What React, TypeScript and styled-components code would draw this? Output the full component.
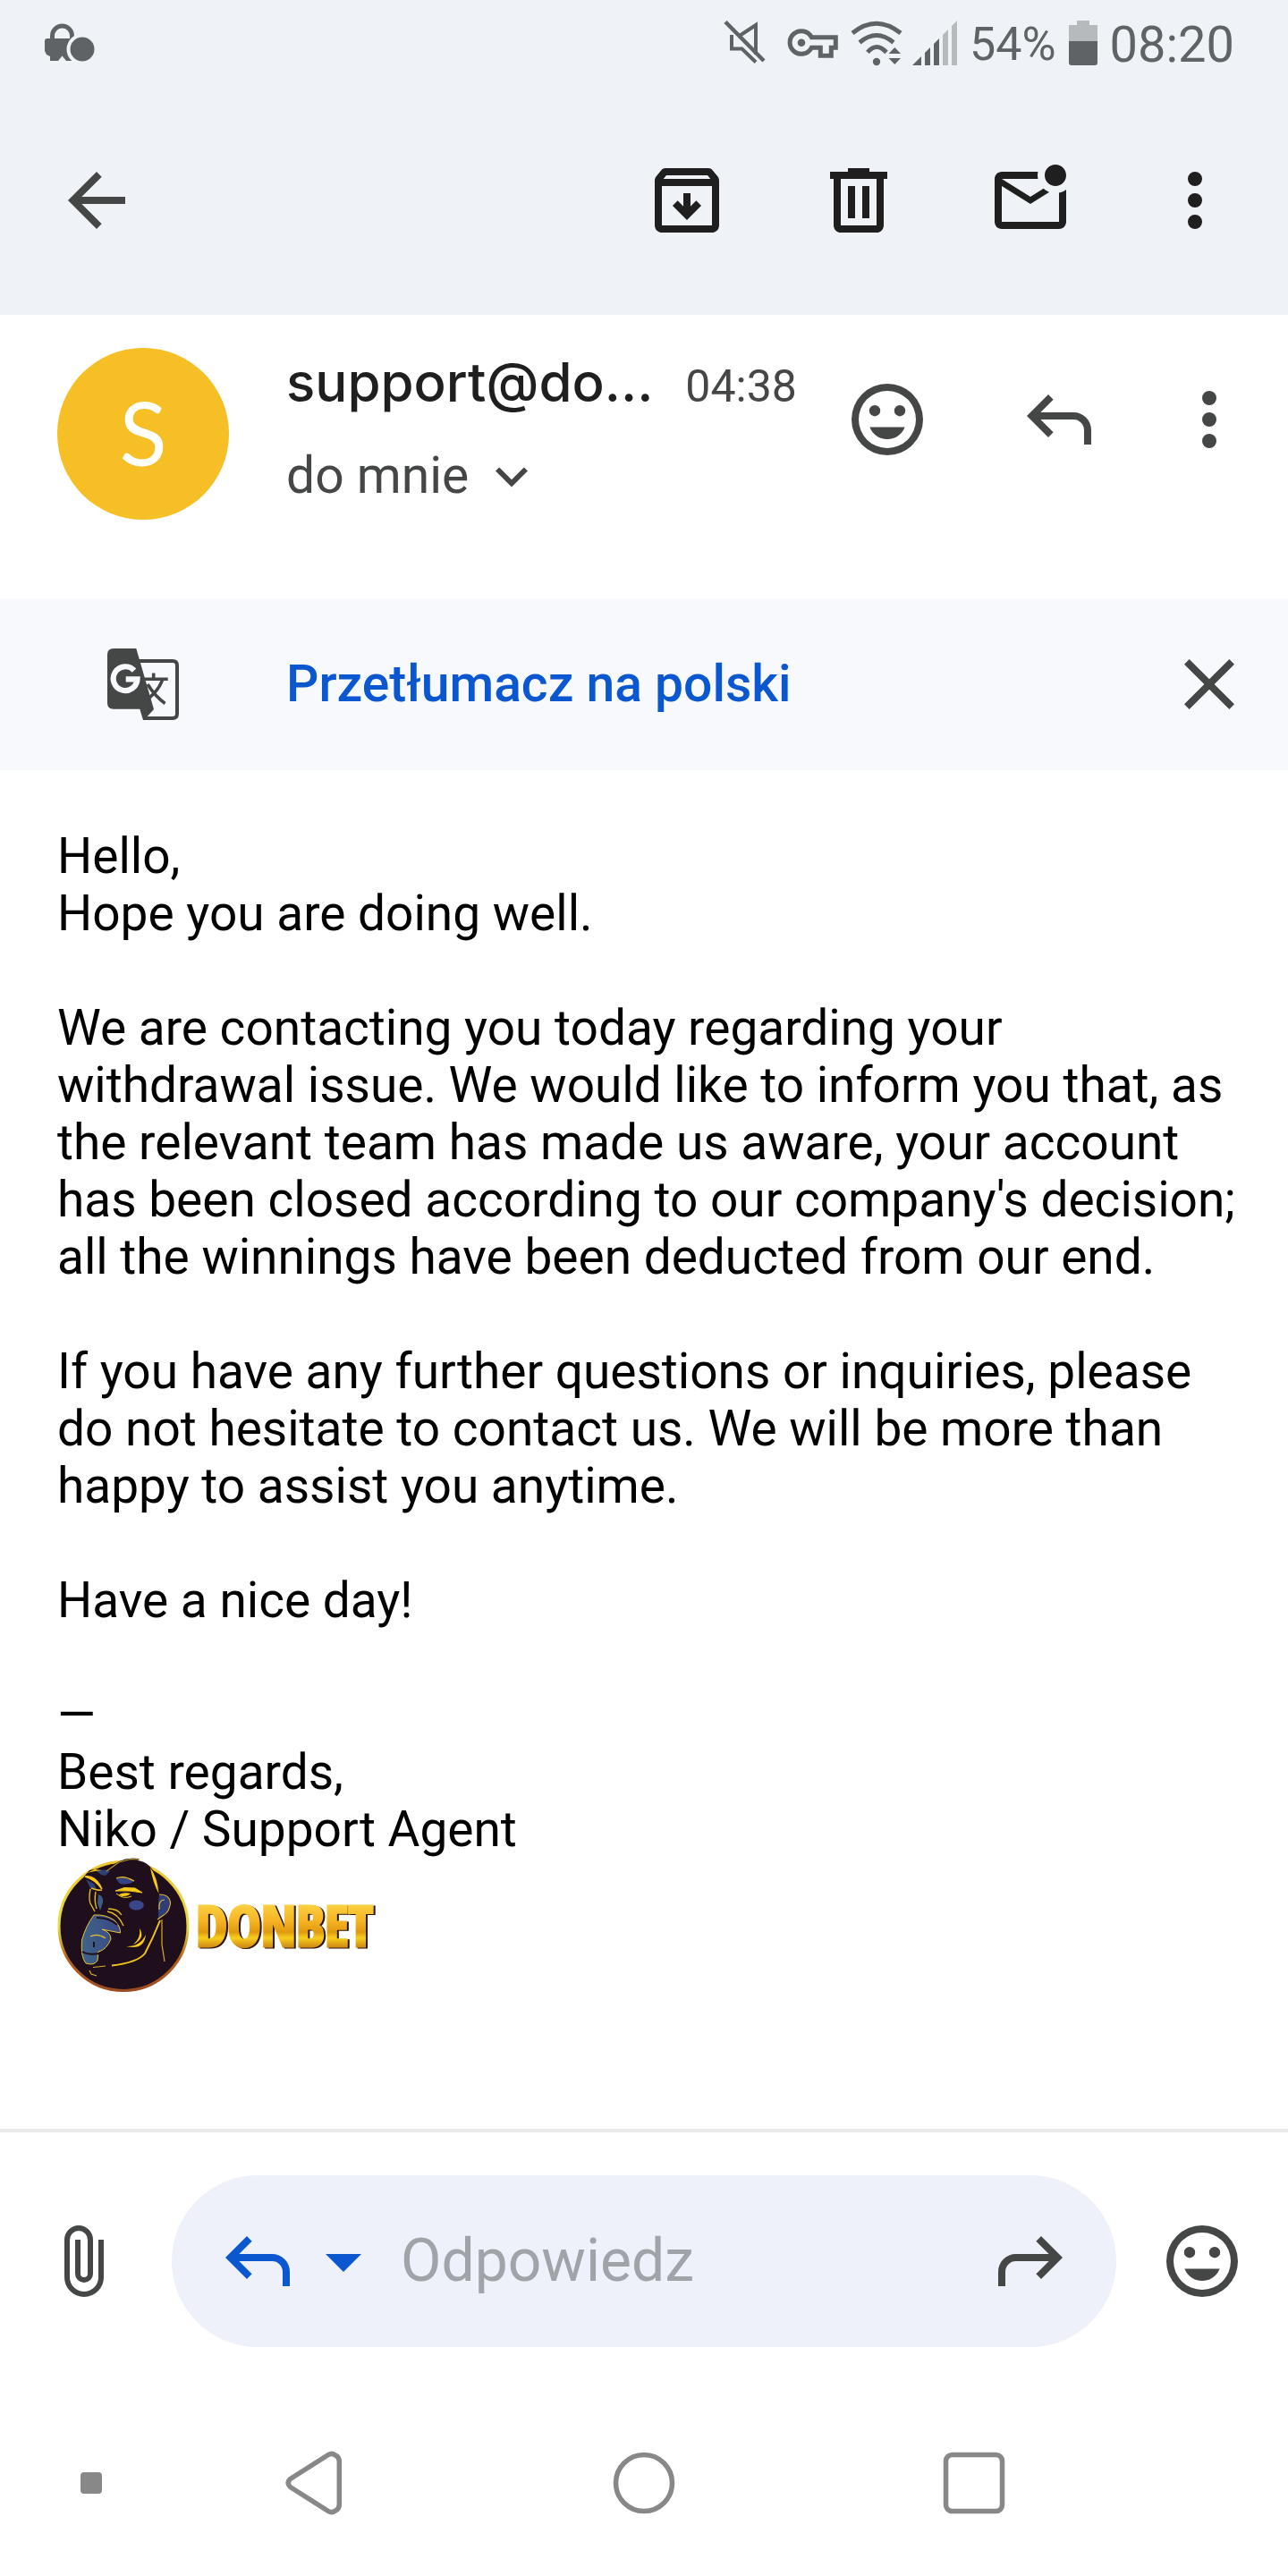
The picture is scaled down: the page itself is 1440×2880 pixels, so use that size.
import React from 'react';
import styled, { createGlobalStyle } from 'styled-components';

const colors = {
  ink: '#1f1f1f',
  muted: '#444746',
  status: '#5f6366',
  faint: '#b6babc',
  bar: '#eff3f8',
  banner: '#f7f9fd',
  field: '#eef1fa',
  blue: '#0b57d0',
  nav: '#888888',
};

const GlobalStyle = createGlobalStyle`
  *, *::before, *::after { box-sizing: border-box; }
  body { margin: 0; background: #fff; }
`;

const Screen = styled.div`
  display: flex;
  flex-direction: column;
  min-height: 100vh;
  background: #fff;
  color: ${colors.ink};
  font-family: Roboto, 'Noto Sans', sans-serif;
`;

const Header = styled.header`
  background: ${colors.bar};
`;

const StatusBar = styled.div`
  display: flex;
  align-items: center;
  justify-content: space-between;
  height: 96px;
  padding: 4px 60px 0 48px;
  color: ${colors.status};
`;

const StatusGroup = styled.div`
  display: flex;
  align-items: center;
  gap: 14px;
`;

const StatusText = styled.span<{ $size: number }>`
  font-size: ${(p) => p.$size}px;
  line-height: 64px;
`;

const Toolbar = styled.nav`
  display: flex;
  align-items: center;
  gap: 96px;
  height: 256px;
  padding: 0 64px 0 60px;
`;

const Spacer = styled.div`
  flex: 1;
`;

const IconButton = styled.button<{ $width?: number; $tone?: string }>`
  display: flex;
  flex: none;
  align-items: center;
  justify-content: center;
  width: ${(p) => p.$width ?? 96}px;
  height: 96px;
  padding: 0;
  border: 0;
  background: none;
  color: ${(p) => p.$tone ?? colors.muted};
  cursor: pointer;

  svg {
    flex: none;
  }
`;

const Sender = styled.section`
  display: flex;
  align-items: flex-start;
  padding: 37px 64px 88px;
`;

const Avatar = styled.div`
  display: flex;
  flex: none;
  align-items: center;
  justify-content: center;
  width: 192px;
  height: 192px;
  margin-right: 64px;
  padding-bottom: 4px;
  border-radius: 50%;
  background: #f6bf26;
  color: #fff;
  font-family: Lato, sans-serif;
  font-size: 98px;
  line-height: 96px;
`;

const SenderDetails = styled.div`
  display: flex;
  flex: 1;
  flex-direction: column;
  gap: 28px;
  min-width: 0;
`;

const SenderLine = styled.div`
  display: flex;
  align-items: baseline;
  gap: 36px;
  white-space: nowrap;
`;

const SenderName = styled.h1`
  margin: 0;
  font-family: Inter, sans-serif;
  font-size: 60px;
  font-weight: 500;
  line-height: 76px;
`;

const SentTime = styled.time`
  color: ${colors.muted};
  font-size: 50px;
  line-height: 72px;
`;

const Recipient = styled.button`
  display: flex;
  align-items: center;
  align-self: flex-start;
  gap: 12px;
  padding: 0;
  border: 0;
  background: none;
  color: ${colors.muted};
  font-family: inherit;
  font-size: 57px;
  line-height: 72px;
  cursor: pointer;
`;

const SenderActions = styled.div`
  display: flex;
  gap: 96px;
  padding-top: 32px;
`;

const TranslateBanner = styled.section`
  display: flex;
  align-items: center;
  height: 192px;
  padding: 0 64px;
  background: ${colors.banner};
`;

const TranslateIcon = styled.div`
  display: flex;
  justify-content: center;
  width: 192px;
  margin-right: 64px;
  color: ${colors.muted};
`;

const TranslateLink = styled.a`
  flex: 1;
  color: ${colors.blue};
  font-size: 57px;
  font-weight: 500;
  line-height: 72px;
  text-decoration: none;
`;

const Message = styled.main`
  flex: 1;
  padding: 64px 56px 64px 64px;
  color: #000;
  font-size: 55px;
  line-height: 64px;
`;

const Paragraph = styled.p`
  margin: 0 0 64px;
`;

const Signature = styled.footer``;

const Logo = styled.svg`
  display: block;
`;

const LogoWord = styled.text`
  font-family: 'Open Sans Condensed', 'Roboto Condensed', sans-serif;
  font-size: 63px;
  font-weight: 700;
  filter: drop-shadow(2px 1px 0 #2a1510);
`;

const ReplyBar = styled.form`
  display: flex;
  align-items: center;
  gap: 48px;
  padding: 48px;
  border-top: 4px solid #e8eaea;
`;

const ReplyField = styled.div`
  display: flex;
  flex: 1;
  align-items: center;
  height: 192px;
  min-width: 0;
  padding: 0 48px;
  border-radius: 96px;
  background: ${colors.field};
`;

const ReplyInput = styled.input`
  flex: 1;
  min-width: 0;
  padding: 0 16px;
  border: 0;
  outline: 0;
  background: none;
  color: ${colors.ink};
  font-family: inherit;
  font-size: 66px;
  line-height: 80px;

  &::placeholder {
    color: #a0a3a8;
    opacity: 1;
  }
`;

const SystemNav = styled.nav`
  display: grid;
  grid-template-columns: 168px repeat(3, 1fr) 168px;
  align-items: center;
  justify-items: center;
  height: 208px;
`;

const NavDot = styled.div`
  padding-left: 36px;
`;

function Glyph({ d, size = 96 }: { d: string; size?: number }) {
  return (
    <svg width={size} height={size} viewBox="0 0 24 24" fill="currentColor" aria-hidden="true">
      <path fillRule="evenodd" d={d} />
    </svg>
  );
}

const paths = {
  back: 'M20 11H7.83l5.59-5.59L12 4l-8 8 8 8 1.41-1.41L7.83 13H20v-2z',
  archive:
    'M20.54 5.23l-1.39-1.68C18.88 3.21 18.47 3 18 3H6c-.47 0-.88.21-1.16.55L3.46 5.23C3.17 5.57 3 6.02 3 6.5V19c0 1.1.9 2 2 2h14c1.1 0 2-.9 2-2V6.5c0-.48-.17-.93-.46-1.27zM6.24 5h11.52l.83 1H5.42l.82-1zM5 19V8h14v11H5zm11-5.5l-4 4-4-4 1.41-1.41L11 13.67V10h2v3.67l1.59-1.58L16 13.5z',
  trash:
    'M7 21c-.55 0-1.02-.2-1.41-.59S5 19.55 5 19V6H4V4h5V3h6v1h5v2h-1v13c0 .55-.2 1.02-.59 1.41S17.55 21 17 21zM17 6H7v13h10zM9 17h2V8H9zm4 0h2V8h-2z',
  unread:
    'M22 8.98V18c0 1.1-.9 2-2 2H4c-1.1 0-2-.9-2-2V6c0-1.1.9-2 2-2h10.1a5 5 0 0 0 0 2H4l8 5 3.67-2.29c.47.43 1.02.76 1.63.98L12 13 4 8v10h16V9.9c.74-.15 1.42-.48 2-.92zM16 5c0 1.66 1.34 3 3 3s3-1.34 3-3-1.34-3-3-3-3 1.34-3 3z',
  more:
    'M12 4a2 2 0 1 0 0 4 2 2 0 0 0 0-4zm0 6a2 2 0 1 0 0 4 2 2 0 0 0 0-4zm0 6a2 2 0 1 0 0 4 2 2 0 0 0 0-4z',
  reply:
    'M19 19v-4c0-.83-.29-1.54-.88-2.13A2.9 2.9 0 0 0 16 12H6.83l3.58 3.59L9 17l-6-6 6-6 1.41 1.41L6.83 10H16c1.38 0 2.56.49 3.54 1.46C20.51 12.44 21 13.63 21 15v4z',
  forward:
    'M5 19v-4c0-.83.29-1.54.88-2.13A2.9 2.9 0 0 1 8 12h9.17l-3.58 3.59L15 17l6-6-6-6-1.41 1.41L17.17 10H8c-1.38 0-2.56.49-3.54 1.46C3.49 12.44 3 13.63 3 15v4z',
  expand: 'M12 16.2l-6-6 1.4-1.4 4.6 4.6 4.6-4.6 1.4 1.4z',
  close: 'M19 6.41L17.59 5 12 10.59 6.41 5 5 6.41 10.59 12 5 17.59 6.41 19 12 13.41 17.59 19 19 17.59 13.41 12z',
  dropdown: 'M7 10h10l-5 5z',
  smile:
    'M12 2a10 10 0 1 0 0 20 10 10 0 0 0 0-20zm0 2a8 8 0 1 1 0 16 8 8 0 0 1 0-16zM8.5 8a1.55 1.55 0 1 0 0 3.1 1.55 1.55 0 0 0 0-3.1zm7 0a1.55 1.55 0 1 0 0 3.1 1.55 1.55 0 0 0 0-3.1zM7.1 14.1h9.8c-.75 2-2.6 3.4-4.9 3.4s-4.150-1.4-4.9-3.4z',
};

function TranslateGlyph() {
  return (
    <svg width={96} height={96} viewBox="0 0 96 96" fill="none" stroke="currentColor" aria-hidden="true">
      <path d="M42 22H81Q86 22 86 27V81Q86 86 81 86H48" strokeWidth={4} />
      <path d="M59.700 35.500V42M47 42.300H75.700M69.500 43Q66 54 54 64M53 48Q61 61 72.500 69.500" strokeWidth={3.600} />
      <path d="M15 8H40.300L60 76L49 88H48L44.300 75.700H15Q8 75.700 8 69V15Q8 8 15 8Z" fill="currentColor" stroke="none" />
      <path d="M53 56.500Q57 61.500 58.500 70" stroke={colors.banner} strokeWidth={0} />
      <path d="M38 32.600A13.400 13.400 0 1 0 41.500 42.300H28.700" stroke={colors.banner} strokeWidth={6.200} />
    </svg>
  );
}

function Paperclip() {
  return (
    <svg width={96} height={96} viewBox="0 0 24 24" fill="none" stroke="currentColor" strokeWidth={1.5} aria-hidden="true">
      <path d="M16.250 6V16.500A4.750 4.750 0 0 1 6.750 16.500V6A3.250 3.250 0 0 1 13.250 6V15.500A1.750 1.750 0 0 1 9.750 15.500V6" />
    </svg>
  );
}

function LockStatus() {
  return (
    <svg width={62} height={54} viewBox="0 0 62 54" aria-hidden="true">
      <path d="M10.500 22V17a11 11 0 0 1 22 0V22" fill="none" stroke="currentColor" strokeWidth={5} />
      <path d="M5 20H38V45H26L21.500 39.500L17 45H8V40L4 38L2 34V23Q2 20 5 20Z" fill="currentColor" />
      <circle cx={44} cy={32} r={15.500} fill="currentColor" stroke={colors.bar} strokeWidth={4} />
    </svg>
  );
}

function MuteStatus() {
  return (
    <svg width={56} height={54} viewBox="0 3 56 54" fill="none" stroke="currentColor" aria-hidden="true">
      <path d="M19.500 19.500L37 8V41" strokeWidth={4} />
      <path d="M10 19V34.500H21.500L37 49.500" strokeWidth={4} />
      <path d="M3 4.500L46 48" strokeWidth={4.500} />
    </svg>
  );
}

function KeyStatus() {
  return (
    <svg width={58} height={54} viewBox="-2 -7 58 54" overflow="visible" aria-hidden="true">
      <path
        d="M27.300 11.700H54.300V23.300H49.300V32.300H37.300V23.300H27.300A12.800 12.800 0 1 1 27.300 11.700Z"
        fill="none"
        stroke="currentColor"
        strokeWidth={5}
      />
      <circle cx={16} cy={17.700} r={4.300} fill="currentColor" />
    </svg>
  );
}

function WifiStatus() {
  return (
    <svg width={56} height={54} viewBox="1 3 56 54" overflow="visible" aria-hidden="true">
      <g fill="none" stroke="currentColor" strokeWidth={5}>
        <path d="M4 17Q30.500 -4.500 58 17" />
        <path d="M12 27.500Q31 11.500 50 27.500" />
        <path d="M21 38.500Q31 26.500 42 38.500" />
      </g>
      <circle cx={31} cy={49} r={4.200} fill="currentColor" />
      <path d="M44.500 40L51.300 33L58 40ZM44.500 45H58L51.300 52Z" fill="currentColor" />
    </svg>
  );
}

function SignalStatus() {
  return (
    <svg width={50} height={54} viewBox="0 0 50 54" aria-hidden="true">
      <path d="M0 50L10 40V50ZM14 36L20 30V50H14ZM24 26L30 20V50H24Z" fill="currentColor" />
      <path d="M34 16L40 10V50H34ZM44 6L50 0V50H44Z" fill={colors.faint} />
    </svg>
  );
}

function BatteryStatus() {
  return (
    <svg width={32} height={54} viewBox="0 0 32 54" aria-hidden="true">
      <path d="M9 0H23V5H32V23H0V5H9Z" fill={colors.faint} />
      <path d="M0 23H32V47Q32 50 29 50H3Q0 50 0 47Z" fill="currentColor" />
    </svg>
  );
}

function DonbetLogo() {
  return (
    <Logo width={356} height={152} viewBox="0 0 356 152" role="img" aria-label="DONBET">
      <defs>
        <linearGradient id="ring" x1="0" y1="0" x2="0" y2="1">
          <stop offset="0" stopColor="#f0c62c" />
          <stop offset="0.5" stopColor="#e9dc3e" />
          <stop offset="0.75" stopColor="#b5601c" />
          <stop offset="1" stopColor="#9c4a22" />
        </linearGradient>
        <linearGradient id="gold" x1="0" y1="0" x2="0" y2="1">
          <stop offset="0.2" stopColor="#fbd648" />
          <stop offset="0.45" stopColor="#f6b524" />
          <stop offset="0.6" stopColor="#e09a10" />
          <stop offset="0.68" stopColor="#f8cd1c" />
          <stop offset="0.8" stopColor="#d08a14" />
          <stop offset="0.9" stopColor="#e8a83a" />
        </linearGradient>
        <linearGradient id="muzzle" x1="0" y1="0" x2="1" y2="0">
          <stop offset="0" stopColor="#3f6488" />
          <stop offset="1" stopColor="#3a4787" />
        </linearGradient>
      </defs>
      <circle cx={74} cy={76.500} r={72} fill="#1f0f1c" stroke="url(#ring)" strokeWidth={3} />
      <path d="M30 21L36 14L47 12L55 14Q68 1 84 .5L92 1L90 3Q104 5 110 20L115 40L118 70L60 90L38 50L33 32Z" fill="#1f0f1c" />
      <path d="M114 41Q124 40 126 51Q125 61 119 63L113 69L113 50Z" fill="#2f3d78" />
      <path d="M114 58Q113 47 120 47M114 41Q126 41 126.500 51Q125 61 119 64L112 69" fill="none" stroke="#d9b536" strokeWidth={1.200} />
      <path d="M46 14L54 13.500L59 15L54 20L49 19L44 15Z" fill="#2e3f74" />
      <path d="M55 15L69 5L82 1.500L92 2" fill="none" stroke="#b99a2f" strokeWidth={1.200} />
      <path d="M31 21Q41 19 48 31L50 35Q42 24 31 21Z" fill="#f9ca18" stroke="#f9ca18" strokeWidth={1.500} />
      <path d="M33 17L42 13L50 14L42 15Z" fill="#f9ca18" />
      <path d="M32 24L37 34L45 37L41 29Z" fill="#314276" />
      <path d="M37 35Q35 46 37 51L42 60M38 34Q47 37 50 36M43 38Q41 48 44 57" fill="none" stroke="#e4bb25" strokeWidth={1.400} />
      <path d="M46 41Q52 43 51 50L48 59L45 51Z" fill="#3b5c86" />
      <path d="M66 24Q72 18 86 26Q80 31 70 29Z" fill="#354481" />
      <path d="M66 23Q74 19 86 26" fill="none" stroke="#f3c51c" strokeWidth={1.200} />
      <path d="M65 37L75 33.500L87 34L95 39Q82 36 65 37Z" fill="#f9ca18" stroke="#f9ca18" />
      <path d="M69 41Q75 38 82 40Q79 43 74 43Q70 43 69 41Z" fill="#f9ca18" />
      <path d="M66 40Q74 47 83 43" fill="none" stroke="#f9ca18" strokeWidth={1} />
      <ellipse cx={88.500} cy={53} rx={8.300} ry={5.500} fill="#3a468a" />
      <path d="M104 11Q112 22 113.500 40Q107 28 104 11Z" fill="#f9ca18" />
      <path d="M57 57Q68 57 72 64M56 60Q68 62 74 76" fill="none" stroke="#e4bb25" strokeWidth={1.400} />
      <path
        d="M41 64Q54 63 64 70Q71 77 70.500 84L50 80Q60 83 60 91Q55 103 46 105L45 115Q41 121 32 118Q26 111 27.500 92Q32 76 41 64Z"
        fill="url(#muzzle)"
        stroke="#e9c32a"
        strokeWidth={1}
      />
      <path d="M37 88Q45 84 54 90" fill="none" stroke="#e9c32a" strokeWidth={1.200} />
      <path d="M28 105Q34 109 47 107M41 94V100M44 67Q58 67 67 75" fill="none" stroke="#1f0f1c" strokeWidth={2} />
      <path d="M92 79Q99 90 85 97Q94 89 92 79ZM99 86Q97 104 77 99Q92 100 99 86Z" fill="#f9ca18" />
      <path d="M115 70Q107 90 98 107Q90 117 61 120.500" fill="none" stroke="#f3c51c" strokeWidth={2} />
      <path d="M117 69V97L120 116M54 121L40 122.500M36 126L38 130L44 132" fill="none" stroke="#d8ae24" strokeWidth={1.200} />
      <LogoWord x={155} y={99} fill="url(#gold)" stroke="url(#gold)" strokeWidth={3}>
        DONBET
      </LogoWord>
    </Logo>
  );
}

export default function App() {
  return (
    <Screen>
      <GlobalStyle />
      <Header>
        <StatusBar>
          <LockStatus />
          <StatusGroup>
            <MuteStatus />
            <KeyStatus />
            <WifiStatus />
            <SignalStatus />
            <StatusText $size={52}>54%</StatusText>
            <BatteryStatus />
            <StatusText $size={56}>08:20</StatusText>
          </StatusGroup>
        </StatusBar>
        <Toolbar>
          <IconButton aria-label="Wstecz"><Glyph d={paths.back} /></IconButton>
          <Spacer />
          <IconButton $tone={colors.ink} aria-label="Archiwizuj"><Glyph d={paths.archive} /></IconButton>
          <IconButton $tone={colors.ink} aria-label="Usuń"><Glyph d={paths.trash} /></IconButton>
          <IconButton $tone={colors.ink} aria-label="Oznacz jako nieprzeczytane"><Glyph d={paths.unread} /></IconButton>
          <IconButton $tone={colors.ink} $width={80} aria-label="Więcej opcji"><Glyph d={paths.more} /></IconButton>
        </Toolbar>
      </Header>

      <Sender>
        <Avatar>S</Avatar>
        <SenderDetails>
          <SenderLine>
            <SenderName>support@do...</SenderName>
            <SentTime>04:38</SentTime>
          </SenderLine>
          <Recipient type="button">
            do mnie
            <Glyph d={paths.expand} size={72} />
          </Recipient>
        </SenderDetails>
        <SenderActions>
          <IconButton aria-label="Dodaj reakcję"><Glyph d={paths.smile} /></IconButton>
          <IconButton aria-label="Odpowiedz"><Glyph d={paths.reply} /></IconButton>
          <IconButton $width={48} aria-label="Więcej"><Glyph d={paths.more} /></IconButton>
        </SenderActions>
      </Sender>

      <TranslateBanner>
        <TranslateIcon><TranslateGlyph /></TranslateIcon>
        <TranslateLink href="#translate">Przetłumacz na polski</TranslateLink>
        <IconButton $width={48} aria-label="Zamknij"><Glyph d={paths.close} /></IconButton>
      </TranslateBanner>

      <Message>
        <Paragraph>
          Hello,
          <br />
          Hope you are doing well.
        </Paragraph>
        <Paragraph>
          We are contacting you today regarding your withdrawal issue. We would like to inform you that, as the
          relevant team has made us aware, your account has been closed according to our company's decision; all the
          winnings have been deducted from our end.
        </Paragraph>
        <Paragraph>
          If you have any further questions or inquiries, please do not hesitate to contact us. We will be more than
          happy to assist you anytime.
        </Paragraph>
        <Paragraph>Have a nice day!</Paragraph>
        <Signature>
          —
          <br />
          Best regards,
          <br />
          Niko / Support Agent
          <DonbetLogo />
        </Signature>
      </Message>

      <ReplyBar onSubmit={(e) => e.preventDefault()}>
        <IconButton type="button" aria-label="Załącz plik"><Paperclip /></IconButton>
        <ReplyField>
          <IconButton type="button" $tone={colors.blue} aria-label="Odpowiedz"><Glyph d={paths.reply} /></IconButton>
          <IconButton type="button" $tone={colors.blue} aria-label="Typ odpowiedzi"><Glyph d={paths.dropdown} /></IconButton>
          <ReplyInput aria-label="Treść odpowiedzi" placeholder="Odpowiedz" />
          <IconButton type="button" aria-label="Przekaż dalej"><Glyph d={paths.forward} /></IconButton>
        </ReplyField>
        <IconButton type="button" aria-label="Emoji"><Glyph d={paths.smile} /></IconButton>
      </ReplyBar>

      <SystemNav>
        <NavDot>
          <svg width={24} height={24} viewBox="0 0 24 24" display="block" aria-hidden="true">
            <rect width={24} height={24} rx={4} fill={colors.nav} />
          </svg>
        </NavDot>
        <IconButton $tone={colors.nav} aria-label="Cofnij">
          <svg width={96} height={96} viewBox="0 0 96 96" fill="none" stroke="currentColor" strokeWidth={5.500} strokeLinejoin="round" aria-hidden="true">
            <path d="M20.500 43.500L63 16.500Q67 14 71 17Q75.300 19 75.300 24V72Q75.300 77 71 79Q67 82 63 79.500L20.500 52.500Q16 48 20.500 43.500Z" />
          </svg>
        </IconButton>
        <IconButton $tone={colors.nav} aria-label="Ekran główny">
          <svg width={96} height={96} viewBox="0 0 96 96" fill="none" stroke="currentColor" strokeWidth={5.500} aria-hidden="true">
            <circle cx={48} cy={48} r={31.500} />
          </svg>
        </IconButton>
        <IconButton $tone={colors.nav} aria-label="Ostatnie aplikacje">
          <svg width={96} height={96} viewBox="0 0 96 96" fill="none" stroke="currentColor" strokeWidth={5.500} aria-hidden="true">
            <rect x={17.500} y={16.500} width={63} height={63} rx={7} />
          </svg>
        </IconButton>
      </SystemNav>
    </Screen>
  );
}
